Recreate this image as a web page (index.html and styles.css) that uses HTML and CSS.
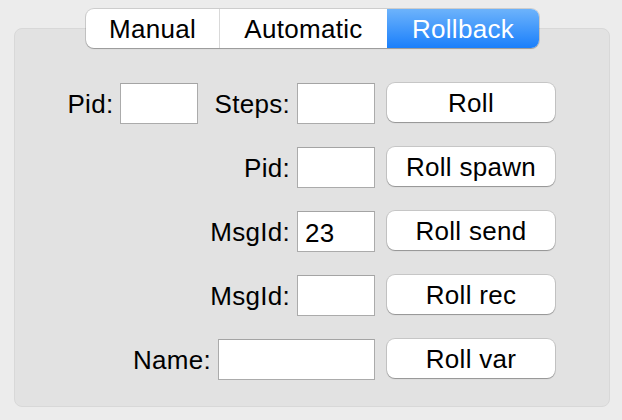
FILE: index.html
```html
<!DOCTYPE html>
<html>
<head>
<meta charset="utf-8">
<link rel="stylesheet" href="styles.css">
</head>
<body>
<div class="window">
  <div class="tabs">
    <div class="seg seg-manual">Manual</div>
    <div class="seg seg-auto">Automatic</div>
    <div class="seg seg-roll selected">Rollback</div>
  </div>
  <div class="panel">
    <div class="row">
      <span class="label">Pid:</span>
      <input class="field small" type="text">
      <span class="label steps">Steps:</span>
      <input class="field small" type="text">
      <button class="btn">Roll</button>
    </div>
    <div class="row">
      <span class="label">Pid:</span>
      <input class="field small" type="text">
      <button class="btn">Roll spawn</button>
    </div>
    <div class="row">
      <span class="label">MsgId:</span>
      <input class="field small" type="text" value="23">
      <button class="btn">Roll send</button>
    </div>
    <div class="row">
      <span class="label">MsgId:</span>
      <input class="field small" type="text">
      <button class="btn">Roll rec</button>
    </div>
    <div class="row">
      <span class="label">Name:</span>
      <input class="field wide" type="text">
      <button class="btn">Roll var</button>
    </div>
  </div>
</div>
</body>
</html>
```

FILE: styles.css
```css
html, body {
  margin: 0;
  padding: 0;
  background: #ececec;
  font-family: "Liberation Sans", Arial, sans-serif;
  font-size: 26px;
  letter-spacing: 0.3px;
  color: #000;
}

.window {
  padding: 9px 12px 0 14px;
  display: flex;
  flex-direction: column;
}

.tabs {
  position: relative;
  z-index: 1;
  display: flex;
  align-self: flex-start;
  margin-left: 72px;
  height: 39px;
  box-sizing: border-box;
  border-radius: 8px;
  background: #fff;
  box-shadow: 0 0 0 1px rgba(0,0,0,0.13), 0 1px 1px rgba(0,0,0,0.22);
  overflow: hidden;
}

.seg {
  display: flex;
  align-items: center;
  justify-content: center;
  line-height: 30px;
  color: #000;
  box-sizing: border-box;
}

.seg-manual { width: 134px; border-right: 1px solid #d9d9d9; }
.seg-auto { width: 167px; }
.seg-roll { width: 152px; }

.seg.selected {
  color: #fff;
  background: linear-gradient(#6db3fb, #1a7ffb);
}

.panel {
  margin-top: -20px;
  width: 596px;
  height: 379px;
  box-sizing: border-box;
  background: #e2e2e2;
  border: 1px solid #d8d8d8;
  border-radius: 8px;
  padding: 54px 54px 0 0;
  display: flex;
  flex-direction: column;
  align-items: flex-end;
  gap: 23px;
}

.row {
  display: flex;
  align-items: flex-start;
  height: 41px;
}

.label {
  line-height: 30px;
  padding-top: 6px;
  margin-right: 7px;
}

.label.steps {
  margin-left: 16px;
}

.field {
  height: 41px;
  box-sizing: border-box;
  border: 1px solid #ababab;
  border-top-color: #a4a4a4;
  background: #fff;
  padding: 4px 7px 0;
  font-family: inherit;
  font-size: 26px;
  letter-spacing: 0.3px;
  color: #000;
  outline: none;
  border-radius: 0;
  margin: 0;
}

.field.small { width: 78px; }
.field.wide { width: 157px; }

.btn {
  margin: 0 0 0 12px;
  width: 168px;
  height: 39px;
  box-sizing: border-box;
  border: none;
  border-radius: 8px;
  background: #fff;
  box-shadow: 0 0 0 1px rgba(0,0,0,0.12), 0 1px 1px rgba(0,0,0,0.25);
  font-family: inherit;
  font-size: 26px;
  letter-spacing: 0.3px;
  color: #000;
  padding: 0;
  line-height: 30px;
}
```
